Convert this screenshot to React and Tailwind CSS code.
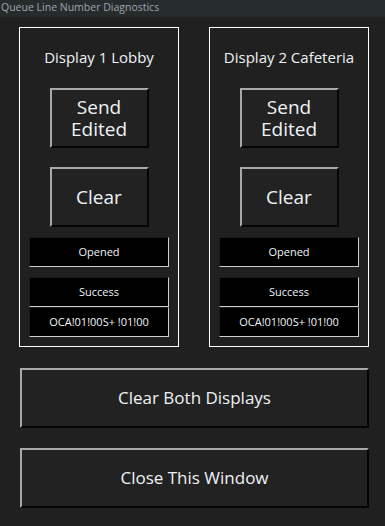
import React from "react";

const font = { fontFamily: '"Open Sans", "Noto Sans", sans-serif' };

const RaisedButton = ({ children, className = "" }) => (
  <button
    className={`flex items-center justify-center bg-[#222222] border-2 border-t-[#a8a8a8] border-l-[#a8a8a8] border-r-[#050505] border-b-[#050505] text-[#eef2f6] leading-[22px] ${className}`}
  >
    {children}
  </button>
);

const StatusBox = ({ children }) => (
  <div className="h-[30px] w-full flex items-center justify-center bg-black border border-t-[#1a1a1a] border-l-[#1a1a1a] border-r-[#cfcfcf] border-b-[#cfcfcf] text-[11px] text-[#eef2f6]">
    {children}
  </div>
);

const DisplayPanel = ({ name }) => (
  <div className="w-[160px] h-[320px] border border-white flex flex-col items-center px-[9px]">
    <div className="mt-[18px] h-[22px] text-[15px] text-[#eef2f6] leading-[22px]">{name}</div>
    <RaisedButton className="mt-[20px] w-[99px] h-[60px] text-[19px]">
      <span className="flex flex-col">
        <span>Send</span>
        <span>Edited</span>
      </span>
    </RaisedButton>
    <RaisedButton className="mt-[19px] w-[99px] h-[60px] text-[19px]">Clear</RaisedButton>
    <div className="mt-[10px] w-full">
      <StatusBox>Opened</StatusBox>
    </div>
    <div className="mt-[10px] w-full flex flex-col">
      <StatusBox>Success</StatusBox>
      <StatusBox>OCA!01!00S+ !01!00</StatusBox>
    </div>
  </div>
);

export default function App() {
  return (
    <div className="w-[385px] h-[526px] bg-[#202020] overflow-hidden" style={font}>
      <div className="h-[17px] bg-[#262b2c] text-[10.5px] leading-[15px] text-[#9ea6ad] pl-[1px]">
        Queue Line Number Diagnostics
      </div>

      <div className="flex gap-[30px] pl-[19px] mt-[10px]">
        <DisplayPanel name="Display 1 Lobby" />
        <DisplayPanel name="Display 2 Cafeteria" />
      </div>

      <div className="flex flex-col gap-[20px] pl-[20px] mt-[21px]">
        <RaisedButton className="w-[349px] h-[60px] text-[17px]">Clear Both Displays</RaisedButton>
        <RaisedButton className="w-[349px] h-[60px] text-[17px]">Close This Window</RaisedButton>
      </div>
    </div>
  );
}
